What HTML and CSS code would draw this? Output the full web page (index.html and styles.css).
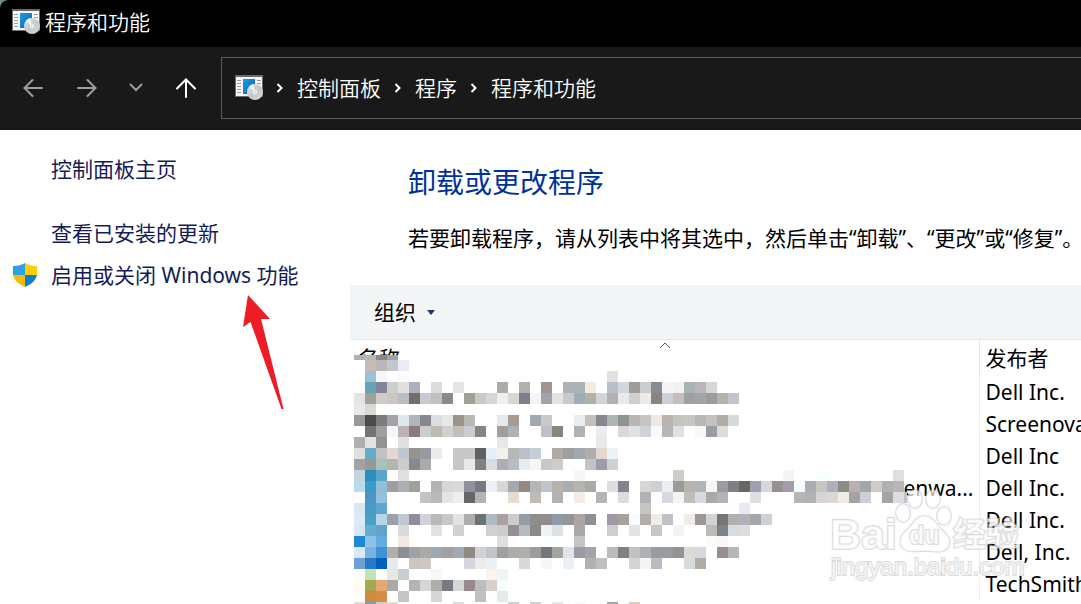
FILE: index.html
```
<!DOCTYPE html>
<html lang="zh-CN">
<head>
<meta charset="utf-8">
<title>程序和功能</title>
<link rel="stylesheet" href="styles.css">
</head>
<body>
<svg class="defs" width="0" height="0" aria-hidden="true">
  <defs>
    <linearGradient id="blue" x1="0" y1="0" x2="1" y2="1"><stop offset="0" stop-color="#1a9ae6"/><stop offset="1" stop-color="#0668b8"/></linearGradient>
    <linearGradient id="disc" x1="0" y1="0" x2="1" y2="1"><stop offset="0" stop-color="#e8eaea"/><stop offset=".5" stop-color="#c3c8c9"/><stop offset="1" stop-color="#d5d9da"/></linearGradient>
    <symbol id="programs" viewBox="0 0 28 26">
      <rect x="0" y="0" width="28" height="22" fill="#6b6b6b"/>
      <rect x="1" y="2" width="26" height="19" fill="#f6f6f6"/>
      <path d="M2 5.5h4M2 8.500h4M2 11.500h4M2 14.500h4M2 17.500h4M22 5.500h4M22 8.500h4" stroke="#9b9b9b"/>
      <rect x="8" y="4" width="12" height="15" fill="url(#blue)"/>
      <circle cx="20" cy="17" r="8" fill="url(#disc)"/>
      <path d="M20 17l-6-5a8 8 0 0 1 4-3z" fill="#f4f5f5"/>
      <circle cx="20" cy="17" r="2" fill="#dfe2e2" stroke="#eef0f0"/>
    </symbol>
    <symbol id="chevron" viewBox="0 0 8 12"><path d="M1.500 2l4 4-4 4" fill="none" stroke="#fff" stroke-width="2"/></symbol>
  </defs>
</svg>
<div class="window">
  <header class="titlebar">
    <svg class="app-icon"><use href="#programs"/></svg>
    <span>程序和功能</span>
  </header>
  <nav class="navbar">
    <button class="nav-btn" aria-label="后退"><svg width="20" height="20" viewBox="0 0 20 20"><path d="M19 10H2M9.500 2L1.500 10l8 8"/></svg></button>
    <button class="nav-btn" aria-label="前进"><svg width="20" height="20" viewBox="0 0 20 20"><path d="M1 10h17M10.500 2l8 8-8 8"/></svg></button>
    <button class="nav-btn recent" aria-label="最近"><svg width="14" height="10" viewBox="0 0 14 10"><path d="M1.500 1.500L7 7l5.500-5.500"/></svg></button>
    <button class="nav-btn up" aria-label="向上"><svg width="20" height="20" viewBox="0 0 20 20"><path d="M10 19V1.500M1 10.500l9-9 9 9"/></svg></button>
    <div class="address">
      <svg class="app-icon"><use href="#programs"/></svg>
      <svg class="chevron"><use href="#chevron"/></svg>
      <a href="#">控制面板</a>
      <svg class="chevron"><use href="#chevron"/></svg>
      <a href="#">程序</a>
      <svg class="chevron"><use href="#chevron"/></svg>
      <a href="#">程序和功能</a>
    </div>
  </nav>
  <div class="body">
    <aside class="sidebar">
      <a class="home" href="#">控制面板主页</a>
      <a href="#">查看已安装的更新</a>
      <a href="#"><svg class="shield" viewBox="0 0 26 26"><path d="M13 1v12H1V4C6 4 10 3 13 1z" fill="#2aa2e4"/><path d="M13 1c3 2 7 3 12 3v9H13z" fill="#ffd000"/><path d="M1 13h12v12C6 22 2 18 1 13z" fill="#fbb900"/><path d="M13 13h12c-1 5-5 9-12 12z" fill="#0f7fd4"/></svg>启用或关闭 Windows 功能</a>
      <svg class="arrow" viewBox="0 0 42 116" aria-hidden="true"><path d="M6 1l22 24h-9l22.500 90h-2L8.500 28 1 33z"/></svg>
    </aside>
    <main class="main">
      <div class="intro">
        <h1>卸载或更改程序</h1>
        <p>若要卸载程序，请从列表中将其选中，然后单击“卸载”、“更改”或“修复”。</p>
      </div>
      <div class="toolbar">
        <button>组织 <svg width="8" height="5" viewBox="0 0 8 5"><path d="M0 0h8L4 5z" fill="#1f3b63"/></svg></button>
      </div>
      <div class="list">
        <table>
          <thead><tr><th class="name">名称<svg class="sort" viewBox="0 0 12 7"><path d="M1 6l5-5 5 5" fill="none" stroke="#555"/></svg></th><th>发布者</th></tr></thead>
          <tbody>
            <tr><td class="name"></td><td>Dell Inc.</td></tr>
            <tr><td class="name"></td><td>Screenovate</td></tr>
            <tr><td class="name"></td><td>Dell Inc</td></tr>
            <tr><td class="name">enwa...</td><td>Dell Inc.</td></tr>
            <tr><td class="name"></td><td>Dell Inc.</td></tr>
            <tr><td class="name"></td><td>Dell, Inc.</td></tr>
            <tr><td class="name"></td><td>TechSmith</td></tr>
          </tbody>
        </table>
        <svg class="mosaic" viewBox="0 0 553 252" shape-rendering="crispEdges" aria-hidden="true"></svg>
        <svg class="watermark" viewBox="0 0 200 90">
          <g class="mark">
            <text x="3" y="56" class="latin">Bai</text>
            <ellipse cx="76" cy="20" rx="7" ry="9"/><ellipse cx="88" cy="6" rx="7" ry="9"/><ellipse cx="106" cy="6" rx="7" ry="9"/><ellipse cx="117" cy="23" rx="7" ry="9"/>
            <path d="M97 23c9 0 12 8 17 13 7 6 11 11 7 18-4 7-13 4-24 4s-18 2-22-4c-4-8 0-13 6-18 6-6 8-13 16-13z"/>
            <text x="82" y="51" class="du">du</text>
            <text x="126" y="53" class="hanzi">经验</text>
            <text x="4" y="82" class="url">jingyan.baidu.com</text>
          </g>
        </svg>
      </div>
    </main>
  </div>
</div>
<script src="mosaic.js"></script>
</body>
</html>
```
FILE: styles.css
```
* { box-sizing: border-box; }
body {
  margin: 0;
  height: 100vh;
  overflow: hidden;
  background: #6d9290;
  font-family: "Noto Sans", "Noto Sans CJK SC", sans-serif;
  font-size: 21px;
  line-height: 32px;
  color: #000;
}
a { color: inherit; text-decoration: none; }
button { border: 0; background: none; font: inherit; color: inherit; padding: 0; }
.defs { position: absolute; }
.window {
  display: flex;
  flex-direction: column;
  height: 100%;
  overflow: hidden;
  border-top-left-radius: 8px;
  background: #fff;
}
.app-icon { width: 28px; height: 26px; flex: none; }
.titlebar {
  display: flex;
  align-items: center;
  gap: 5px;
  flex: none;
  height: 47px;
  padding: 0 12px 4px;
  background: #000;
  color: #fff;
  font-weight: 350;
}
.navbar {
  display: flex;
  align-items: center;
  flex: none;
  height: 83px;
  padding: 0 0 2px 6px;
  background: #191919;
  color: #fff;
}
.nav-btn {
  display: flex;
  align-items: center;
  justify-content: center;
  width: 54px;
  height: 54px;
}
.nav-btn path { fill: none; stroke: #9d9d9d; stroke-width: 2; stroke-linecap: round; }
.nav-btn.recent { width: 44px; }
.nav-btn.up { width: 56px; }
.nav-btn.up path { stroke: #fff; }
.address {
  display: flex;
  align-items: center;
  flex: 1;
  height: 62px;
  margin-left: 7px;
  padding-left: 13px;
  border: 1px solid #5a5a5a;
  border-right: 0;
  font-weight: 350;
}
.chevron { width: 8px; height: 12px; flex: none; margin: 0 13px; }
.body { display: flex; flex: 1; min-height: 0; }
.sidebar {
  position: relative;
  flex: none;
  width: 350px;
  padding: 18px 0 0 51px;
  color: #151c55;
  line-height: 42px;
}
.sidebar a { display: block; position: relative; white-space: nowrap; }
.sidebar .home { margin-bottom: 22px; }
.shield { position: absolute; left: -39px; top: 8px; width: 26px; height: 26px; }
.arrow { position: absolute; left: 242px; top: 164px; width: 42px; height: 116px; fill: #ee1c25; }
.main { display: flex; flex-direction: column; flex: 1; min-width: 0; }
.intro { padding: 32px 0 31px 58px; white-space: nowrap; }
h1 { margin: 0 0 20px; font-size: 28px; line-height: 40px; font-weight: 400; color: #003399; }
p { margin: 0; }
.toolbar {
  display: flex;
  align-items: center;
  flex: none;
  height: 55px;
  padding-left: 24px;
  background: #f4f5f7;
  border-bottom: 1px solid #e6e7e8;
}
.toolbar button { display: flex; align-items: center; gap: 11px; }
.list { position: relative; flex: 1; min-height: 0; overflow: hidden; }
table { width: 100%; table-layout: fixed; border-collapse: collapse; }
th, td {
  height: 32px;
  padding: 0 0 0 6px;
  overflow: hidden;
  text-align: left;
  font-weight: 400;
  line-height: 28px;
  white-space: nowrap;
}
th { height: 36px; }
.name { position: relative; width: 629px; border-right: 1px solid #e5e5e5; }
th.name { padding-left: 8px; }
td.name { padding-right: 5px; border-color: #e8f1f8; text-align: right; }
.sort { position: absolute; left: 309px; top: 2px; width: 12px; height: 7px; }
.mosaic { position: absolute; left: 4px; top: 15px; width: 553px; height: 252px; }
.watermark { position: absolute; left: 477px; top: 153px; width: 200px; height: 90px; overflow: visible; }
.mark { fill: #fff; fill-opacity: 0.7; stroke: #b8b8b8; stroke-opacity: 0.5; stroke-width: 2; paint-order: stroke; }
.latin { font: bold 43px "Liberation Sans", sans-serif; }
.du { font: bold 25px "Liberation Sans", sans-serif; }
.hanzi { font: bold 33px "Noto Sans CJK SC", sans-serif; }
.url { font: 24px "Liberation Sans", sans-serif; }
```
FILE: mosaic.js
```
// Each row: [top, height, cells]; "-" is an empty cell, "@n" jumps to column n.
const CELL = 11;
const rows = [
  [0, 5, "b0b0ae b8b8b6 8e8686 a2a2a2"],
  [5, 11, "- c8bab0 bab8b6 c2c6ce e8edf5"],
  [16, 11, "- 9cc0d8 f7f7f7 - fafbfd @23 e2e2e2"],
  [27, 11, "fcfcfc 68a2b6 82859a cecece e0e0e0 adafc0 - d9dcdb - e6e5e4 - - - aeaca8 - b1b2b0 - a1968f - adb2b6 adb2b5 f5ebe0 - b6bfcc d4d7de 9f9c9b cccecd 898993 f5f5f3 f1f1f1 a9b2b3 bab7b7 d7d7d7"],
  [38, 11, "e4e4e4 9fa19a d0cdc7 cec4c0 bbbdc4 736e6a c7cad1 bfc2c3 8b8b89 - a1a197 cbc8c3 d9d5d3 f0efef dad6d4 807e8c f4f4f6 a1a4af e3e4df c9c9c7 a2adba b1b0aa d3d4d8 b2b2b3 e9eaed d4cecb ecebe9 8a837e cccfda c5bebb 9f9fa4 a3a4aa 9a9e9b b6b1ac c0c4cf"],
  [49, 11, "e8e8e8 d8d8d6"],
  [60, 11, "989898 4a4b4d 7c7c7d a2a3a7 dfe7ef afb5b9 898890 dadee1 e7e7e7 9c9388 bcb8b4 - - e4e9ec a89c90 - 9fa9b0 cacaca - - e8edf1 c3bfbc 878590 afb4b7 8f9493 bab5b2 c5c6c3 f2e8e3 bab4b1 c3c4be cac5c0 b8b9b7 c5c1bc b0ada6 d6dadd"],
  [71, 11, "- 747475 a0a0a0 f6f7f9 bab4b8 8c797e cccccd bfb9b0 d0d0d0 c2beb8 cacdd1 8a837f fefefb a49b9b acb2ba - - bdc0c8 8a847f - b2b2b2 - ebecf2 - d8d8d8 dfe2e8 d0d4da f7fbfe b6b7ba e0e0e0 - f7f8fa 989ca4 dfdbd7"],
  [82, 11, "afafaf e3e3e3 919293 - e0e0e0 @13 e5e7e9 @22 e8e8e8"],
  [93, 11, "e0e0e0 64adc6 c1c1c1 e4d8ce bec7d0 96938d 9499a2 eaecec - c9c8c7 c9c6c4 5e6063 e6eff7 f1f1e9 b7b7b8 bcbfc7 c3ced9 - adaba4 9f9e9e a0a9af aeaeae e5d7cd ebf4f4"],
  [104, 11, "a3a3a3 989896 a5c3b8 b7b5b4 cdcdcd 858993 abaca7 - - cac6c4 e9e9e9 808183 d9dce0 adadb2 b4bcc4 eaebed f8f7f6 cbc7c5 cdcdce - - c3c3c5 9a9eac d0d1d6"],
  [115, 11, "c5d5dd 288fc1 5aa5cb - dfdfdf @20 f7f7f6 @29 d0ccc8 @39 f5f5f5 @42 f8ffff @49 e0e0db"],
  [126, 11, "b9dcea 3c9ac9 91bfd5 9e9ea0 adafb7 9ea199 - b3b3b3 d6d6d6 d8d8d6 8f929b 727b84 eff0f2 d6d7d5 a2a9b1 938882 b3b6b5 c0c4ca b9b1ac a8adb1 b4b4b4 aba9a4 - dededf 82858f fffffb d9d5d3 cdd1d6 e9eef2 9d9b95 b8b5ae b2b4b7 f4f7f2 9b9ba0 808080 686662 9da1ad d7d8dc 969095 a39caa f3ffff a9aeb0 c8c5c3 adb0bc 8a8c88 b9b0ad a3a6ac d2cac3 b0b0b3 b9b4b7"],
  [137, 11, "- 4b96c4 94c1da - - - c3c3bf b8b8b7 e3e3e3 eeeeee 636969 b8b3ad - - e6ddd1 - c0bbb4 - b1b2b6 - f3ede6 - b9b4b4 - dcdde0 - b0b2b6 - d5d8df f5f4f4 c0bdb8 d9dadd aba8a5 b0b4bb - - e0e0e0 @40 b8b4b2 aeb4b6 d7d3d6 dbd7d1 f0ede8 a4a2a3 cbcfd7 - a1a6a2 dfdde4 c0c2c8"],
  [148, 11, "d8e9f2 499bc8 5ea6cf @26 c7c5bf @35 e5eaf4"],
  [159, 11, "daebf3 4ba0c9 b5d7e7 9aa1aa bfc7cf 928d9f d0d2d8 b9b8bb cac7c6 e2e2e0 adadaf 6b7372 b1b9c3 a8a0a1 cccccd 939ea9 8e8f8a 928d8c 909ba9 919799 aea5a0 8d9097 - 9f99a5 a7a299 f7fcff b3aeaa eeedea c1c2c8 - f2ece9 9e9691 d3d2d6 757571 b0afae b1b1b9 a2a8a8 cdd1d5"],
  [170, 11, "d6e7f0 6aaace 61a4cb - dadada - - e1e1e1 - d4d1cd - - cfd0d6 cfccc8 949093 b6bbc0 8a8b86 f1f2f4 dce1e4 - a8aaa9 - - d0cccf - e1e5e8 - c9c6c2 - f3f3f3 - - bbbbb8 7d8488 d9dbe1 dedddc"],
  [181, 11, "2087d5 90c1e9 65ace1 - f2e8e3 @13 dfdfdf @20 c8c4c2 @32 fcfbfa f8f8f4"],
  [192, 11, "d8e8f6 7bb1e0 3e92d6 b5ada8 8c9096 a0a2a6 aaaaa6 9da9b1 a1a1a4 a2a9b3 908a83 ced2d7 c0c3c8 a49f9d aeadae b2aea9 9c9c9c 727779 a3a5a1 e0e3e9 9b9ca1 a3a4a8 - bbbbbb 808080 c1c1c3 abb1b4 989d9c 989ba0 949393 ddd9d5 d5d9dd - 968e92 b6b5b8"],
  [203, 11, "6fa0d5 2979c6 0060b9 e6eaef - cac7c3 d0c7c5 - - - d4d7e0 eeeae5 ebf0f4 - - d8d8d5 - f6f6f6 - ebf0f5 - b4b0ae bfbfc1 - - d4d4d7 f4f4f4 b7bdc2 - - d7dad9 b2aba6"],
  [214, 11, "fdfefb c7e2b3 - e9e7e2 c7cdd0 - - f9f8f7 @12 f9f2ed ebf4f8"],
  [225, 11, "fffbf3 a8a64e e3a972 a9a9aa fefefe b7b3b1 d6d6d6 adadae 757b80 d2d8d6 998a92 b9bdbd d6d0cc fafdfe"],
  [236, 11, "- d08a40 d48e47 - c5c6c2 - - dad6d5 @11 c0c2c1 fefefd e3e9ec"],
  [247, 5, "e0e0de 70a4cc d0ccc8 e0dcd8 @9 dcdcda @14 d0d0ca @16 d0d0ca @18 e6e6e6 @20 f8f8f8 @23 a0a8ac @25 dccab8"]
];
const svg = document.querySelector(".mosaic");
function rect(x, y, w, h, fill) {
  const r = document.createElementNS("http://www.w3.org/2000/svg", "rect");
  r.setAttribute("x", x);
  r.setAttribute("y", y);
  r.setAttribute("width", w);
  r.setAttribute("height", h);
  r.setAttribute("fill", fill);
  svg.appendChild(r);
}
rect(0, 0, 550, 252, "#fff");
for (const [y, h, cells] of rows) {
  let col = 0;
  for (const c of cells.split(" ")) {
    if (c[0] === "@") { col = Number(c.slice(1)); continue; }
    if (c !== "-") rect(col * CELL, y, col === 50 ? 3 : CELL, h, "#" + c);
    col += 1;
  }
}
```
